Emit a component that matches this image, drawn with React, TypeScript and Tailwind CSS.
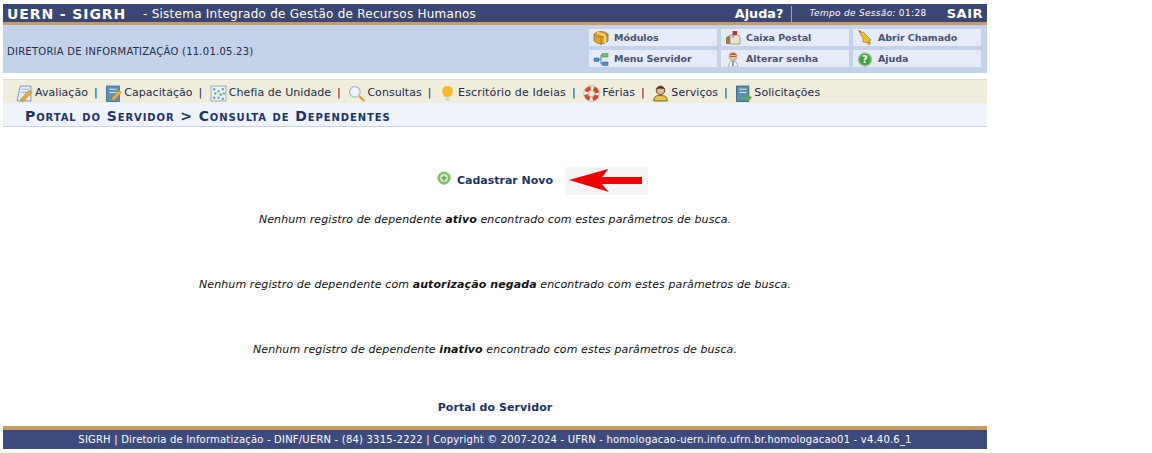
import React from "react";

const S = ({ children, size = 16 }: { children: React.ReactNode; size?: number }) => (
  <svg width={size} height={size} viewBox="0 0 16 16" className="shrink-0">{children}</svg>
);

const IBox = () => (
  <S>
    <path d="M1 4 Q8 -1 15 4 L15 11 Q8 17 1 11 Z" fill="#dfa62a" stroke="#94691a" strokeWidth=".8" />
    <path d="M1 5 Q8 9 15 5 M8 7 V15" fill="none" stroke="#9a7420" strokeWidth=".8" />
    <path d="M4 2.6 Q9 4 12 6 V13" fill="none" stroke="#f6e08c" strokeWidth="1.6" />
  </S>
);
const IMail = () => (
  <S>
    <path d="M1 8 Q3 4 6 7 V14 H1 Z" fill="#9a7b4f" />
    <path d="M5 5 H12 Q15 5 15 8 V14 H5 Z" fill="#e9e4d4" stroke="#a08a60" strokeWidth=".8" />
    <path d="M8 1 V8" stroke="#888" strokeWidth="1.2" />
    <path d="M8 1 H12 V5 H8 Z" fill="#d42a2a" />
  </S>
);
const IBell = () => (
  <S>
    <path d="M1 0 L4 1 L3 3 Z" fill="#7b5a1c" />
    <path d="M3 2 Q7 1 9 5 L14 10 Q10 14 6 12 L6 8 Q3 5 3 2 Z" fill="#eebc30" stroke="#a57a1a" strokeWidth=".7" />
    <circle cx="12" cy="13" r="1.8" fill="#c98e1e" />
  </S>
);
const INet = () => (
  <S>
    <rect x="1" y="7" width="5" height="3.5" fill="#4a8fd0" stroke="#2c6aa5" strokeWidth=".5" />
    <path d="M6 8.5 H8 M8 4 V13 M8 4 H10 M8 13 H10" stroke="#5a7ea0" strokeWidth="1" />
    <rect x="9.5" y="2.5" width="5.5" height="3.5" fill="#6cc46c" stroke="#3a8f3a" strokeWidth=".5" />
    <rect x="9.5" y="11" width="5.5" height="3.5" fill="#4a8fd0" stroke="#2c6aa5" strokeWidth=".5" />
  </S>
);
const IPerson = () => (
  <S>
    <circle cx="8" cy="5.5" r="4" fill="#eebf9b" stroke="#b07a55" strokeWidth=".6" />
    <path d="M4 4.5 Q8 -0.5 12 4.5 Q8 3 4 4.5 Z" fill="#c2461e" />
    <path d="M5 5.5 H11" stroke="#555" strokeWidth=".8" />
    <path d="M3 16 L5 10.5 H11 L13 16 Z" fill="#eef1f8" stroke="#8b9bb8" strokeWidth=".7" />
    <path d="M8 10.5 V15" stroke="#3f6fb0" strokeWidth="1.2" />
  </S>
);
const IHelp = () => (
  <S>
    <circle cx="8" cy="8.5" r="6.5" fill="#3da33d" stroke="#9bc59b" strokeWidth="1.4" />
    <text x="8" y="12" textAnchor="middle" fontSize="10" fontWeight="700" fill="#fff" fontFamily="'DejaVu Sans',sans-serif">?</text>
  </S>
);
const IEval = () => (
  <S size={17}>
    <path d="M4 1 H14 V15 H1 Z" fill="#e5eefa" stroke="#6f93c0" strokeWidth=".9" />
    <path d="M5 4 H12 M5 7 H11" stroke="#9ab6d8" />
    <path d="M4 14 L12 5 L15 7 L7 15.5 Z" fill="#e9a93a" stroke="#a8741c" strokeWidth=".5" />
  </S>
);
const ICap = () => (
  <S size={17}>
    <rect x="1.5" y="1" width="12" height="14.5" fill="#5f8fb8" stroke="#3b6a90" strokeWidth=".8" />
    <path d="M4 4 H11 M4 7 H11" stroke="#d6e6f2" />
    <path d="M6 13 L13 5 L15.5 7 L8 15 Z" fill="#eeb03c" stroke="#a8741c" strokeWidth=".5" />
  </S>
);
const IChart = () => (
  <S size={17}>
    <rect x="1" y="1" width="14" height="14" fill="#eef3f6" stroke="#8aa3b5" strokeWidth=".8" />
    {[[3,3,"#5a93c8"],[7,5,"#5fae6a"],[11,3,"#5a93c8"],[4,7,"#5fae6a"],[9,8,"#5a93c8"],[12,7,"#5fae6a"],[3,11,"#5a93c8"],[7,11,"#5fae6a"],[11,12,"#5a93c8"]].map(([x,y,c],i)=>(
      <rect key={i} x={x as number} y={y as number} width="2" height="2" fill={c as string} />
    ))}
  </S>
);
const ISearch = () => (
  <S size={17}>
    <circle cx="6.5" cy="6.5" r="5" fill="#eef4fa" stroke="#aab3bd" strokeWidth="1.2" />
    <path d="M10.5 10.5 L15.5 15" stroke="#d8a84e" strokeWidth="2.4" />
  </S>
);
const IBulb = () => (
  <S size={17}>
    <path d="M8 1 Q13 1 13 6 Q13 9 10.5 11 H5.5 Q3 9 3 6 Q3 1 8 1 Z" fill="#f8b82e" />
    <path d="M6 11.5 H10 V14.5 Q8 16 6 14.5 Z" fill="#d8d8cc" />
  </S>
);
const IBuoy = () => (
  <S size={17}>
    <circle cx="8" cy="8" r="7.4" fill="#fbf7f2" stroke="#c5a090" strokeWidth=".6" />
    <circle cx="8" cy="8" r="5.2" fill="none" stroke="#d8452c" strokeWidth="3.6" strokeDasharray="5.4 2.77" strokeDashoffset="-1.4" />
    <circle cx="8" cy="8" r="3" fill="#f1eddd" stroke="#b0705c" strokeWidth=".5" />
  </S>
);
const IUser = () => (
  <S size={17}>
    <circle cx="8" cy="5" r="4" fill="#e8b98a" stroke="#3b2a12" strokeWidth=".8" />
    <path d="M4 4 Q8 -1 12 4 Q8 2.5 4 4 Z" fill="#33261a" />
    <path d="M1.5 15 Q2 10 6 10 H10 Q14 10 14.5 15 Z" fill="#e4c84a" stroke="#5f5018" strokeWidth=".8" />
  </S>
);
const IDoc = () => (
  <S size={17}>
    <rect x="1.5" y="1" width="11.5" height="14.5" fill="#5d8fa8" stroke="#2e5f78" strokeWidth=".8" />
    <path d="M4 4 H11 M4 7 H11" stroke="#dbeaf0" />
    <path d="M8 11 H12 V8.5 L16 12 L12 15.5 V13.5 H8 Z" fill="#58b04a" />
  </S>
);
const IAdd = () => (
  <S size={15}>
    <circle cx="7.5" cy="7.5" r="6.8" fill="#7cbb6a" stroke="#a5c79c" strokeWidth=".8" />
    <circle cx="7.5" cy="7.5" r="4.2" fill="#d7ecd0" />
    <path d="M7.5 5 V10 M5 7.5 H10" stroke="#5da24a" strokeWidth="1.6" />
  </S>
);

const tool = "flex h-[17px] items-center gap-[5px] bg-[#e5ebf8] pl-[4px] pt-[1px] text-[9.5px] font-bold tracking-[-0.05px] text-[#46526f]";

const Menu = ({ icon, label, last, wide }: { icon: React.ReactNode; label: string; last?: boolean; wide?: boolean }) => (
  <>
    <span className="flex items-center gap-[2px]">
      {icon}
      <span className={wide ? "tracking-[0.15px]" : undefined}>{label}</span>
    </span>
    {!last && <span className="ml-[6px] mr-[7.5px]">|</span>}
  </>
);

const msg = "text-center text-[11px] italic leading-[14px] tracking-[0.1px] text-[#111]";

export default function App() {
  return (
    <div className="h-[453px] w-[1152px] overflow-hidden bg-white pl-[3px] pt-[4px] font-['DejaVu_Sans',sans-serif]">
      <div className="flex h-[445px] w-[984px] flex-col">
        <header className="flex h-[18px] items-center bg-[#3a4674] pl-[4px] pr-[4px] pt-[2px] text-white">
          <span className="w-[136px] text-[14px] font-bold leading-[16px] tracking-[0.9px]">UERN - SIGRH</span>
          <span className="text-[12px] leading-[16px] tracking-[0.25px]">- Sistema Integrado de Gestão de Recursos Humanos</span>
          <span className="ml-auto border-r border-[#c99c60] pr-[8px] text-[12.8px] font-bold leading-[16px]">Ajuda?</span>
          <span className="ml-[17px] text-[9px] italic tracking-[0.3px]">Tempo de Sessão:</span>
          <span className="ml-[3px] text-[9px] tracking-[0.4px]">01:28</span>
          <span className="ml-[20px] text-[13px] font-bold leading-[16px] tracking-[0.5px]">SAIR</span>
        </header>
        <div className="h-[3px] bg-[#c89b64]" />
        <div className="flex h-[48px] items-start justify-between bg-[#c4d2eb] pl-[4px] pr-[6px] pt-[4px]">
          <span className="mt-[16px] text-[10px] leading-[14px] tracking-[0.25px] text-[#222a4a]">DIRETORIA DE INFORMATIZAÇÃO (11.01.05.23)</span>
          <div className="grid grid-cols-[128px_128px_128px] gap-[4px]">
            <div className={tool}><IBox />Módulos</div>
            <div className={tool}><IMail />Caixa Postal</div>
            <div className={tool}><IBell />Abrir Chamado</div>
            <div className={tool}><INet />Menu Servidor</div>
            <div className={tool}><IPerson />Alterar senha</div>
            <div className={tool}><IHelp />Ajuda</div>
          </div>
        </div>
        <div className="h-[6px] bg-white" />
        <nav className="flex h-[24px] items-center border-t border-[#dedede] bg-[#f1eddd] pl-[13px] pt-[3px] text-[11px] tracking-[0.05px] text-[#222a4a]">
          <Menu icon={<IEval />} label="Avaliação" />
          <Menu icon={<ICap />} label="Capacitação" />
          <Menu icon={<IChart />} label="Chefia de Unidade" />
          <Menu icon={<ISearch />} label="Consultas" />
          <Menu icon={<IBulb />} label="Escritório de Ideias" wide />
          <Menu icon={<IBuoy />} label="Férias" />
          <Menu icon={<IUser />} label="Serviços" />
          <Menu icon={<IDoc />} label="Solicitações" last />
        </nav>
        <div className="flex h-[24px] items-center border-b border-[#c9d3e2] bg-[#eff3fa] pl-[22px] pt-[3px] text-[14px] font-bold tracking-[0.9px] text-[#1e3468] [font-variant:small-caps]">
          Portal do Servidor &gt; Consulta de Dependentes
        </div>
        <main className="flex flex-1 flex-col items-center">
          <div className="relative mt-[40px] flex h-[28px] items-center">
            <span className="-mt-[5px] mr-[5px]"><IAdd /></span>
            <span className="text-[11px] font-bold text-[#1e3468]">Cadastrar Novo</span>
            <span className="absolute left-[128px] top-0 flex h-[28px] w-[83px] items-center justify-center bg-[#f6f5f5]">
              <svg width="83" height="28" viewBox="0 0 83 28">
                <path d="M4 13 L43 2 Q40 7 37 10 L77 10 L77 17 L37 17 Q40 21 44 25 Z" fill="#f00000" />
              </svg>
            </span>
          </div>
          <p className={`mt-[18px] ${msg}`}>Nenhum registro de dependente <b>ativo</b> encontrado com estes parâmetros de busca.</p>
          <p className={`mt-[51px] ${msg}`}>Nenhum registro de dependente com <b>autorização negada</b> encontrado com estes parâmetros de busca.</p>
          <p className={`mt-[51px] ${msg}`}>Nenhum registro de dependente <b>inativo</b> encontrado com estes parâmetros de busca.</p>
          <a className="mt-[43px] text-[11px] font-bold tracking-[0.08px] text-[#1e3468]">Portal do Servidor</a>
        </main>
        <div className="h-[4px] bg-[#c89b64]" />
        <footer className="flex h-[19px] items-center justify-center bg-[#3d4a7c] text-[10px] tracking-[0.2px] text-white">
          SIGRH | Diretoria de Informatização - DINF/UERN - (84) 3315-2222 | Copyright © 2007-2024 - UFRN - homologacao-uern.info.ufrn.br.homologacao01 - v4.40.6_1
        </footer>
      </div>
    </div>
  );
}
